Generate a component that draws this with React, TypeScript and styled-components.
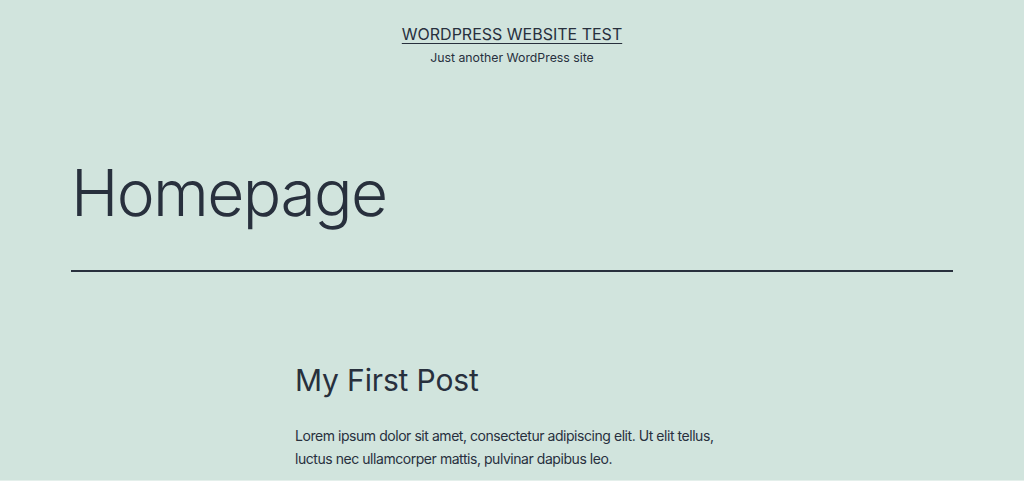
import React from "react";
import styled, { createGlobalStyle } from "styled-components";

const GlobalStyle = createGlobalStyle`
  html, body {
    margin: 0;
    padding: 0;
    background: #d1e4dd;
  }
  body {
    font-family: Inter, "Noto Sans", "Liberation Sans", sans-serif;
    color: #28303d;
    overflow: hidden;
  }
`;

const Page = styled.div`
  min-height: 480px;
  background: #d1e4dd;
  border-bottom: 1px solid #e4efeb;
`;

const Header = styled.header`
  display: flex;
  flex-direction: column;
  align-items: center;
  padding-top: 24px;
`;

const SiteTitle = styled.a`
  font-size: 16px;
  line-height: 20px;
  text-transform: uppercase;
  color: #28303d;
  text-decoration: underline;
  text-decoration-thickness: 1px;
  text-underline-offset: 3px;
`;

const Tagline = styled.p`
  margin: 6px 0 0;
  font-size: 12.3px;
  line-height: 16px;
`;

const Main = styled.main`
  padding-top: 89px;
`;

const Wide = styled.div`
  width: 882px;
  margin: 0 auto;
`;

const PageTitle = styled.h1`
  margin: 0;
  font-size: 64px;
  font-weight: 300;
  line-height: 76px;
  letter-spacing: -0.025em;
`;

const Rule = styled.hr`
  margin: 39px 0 0;
  border: none;
  height: 2px;
  background: #28303d;
`;

const Content = styled.article`
  width: 434px;
  margin: 0 auto;
  padding-top: 89px;
`;

const PostTitle = styled.h2`
  margin: 0;
  font-size: 30px;
  font-weight: 400;
  line-height: 38px;
  letter-spacing: -0.005em;
`;

const Body = styled.p`
  margin: 25px 0 0;
  font-size: 14px;
  line-height: 23px;
  letter-spacing: -0.45px;
`;

export default function App() {
  return (
    <Page>
      <GlobalStyle />
      <Header>
        <SiteTitle href="#">WordPress Website Test</SiteTitle>
        <Tagline>Just another WordPress site</Tagline>
      </Header>
      <Main>
        <Wide>
          <PageTitle>Homepage</PageTitle>
          <Rule />
        </Wide>
        <Content>
          <PostTitle>My First Post</PostTitle>
          <Body>
            Lorem ipsum dolor sit amet, consectetur adipiscing elit. Ut elit tellus,
            luctus nec ullamcorper mattis, pulvinar dapibus leo.
          </Body>
        </Content>
      </Main>
    </Page>
  );
}
